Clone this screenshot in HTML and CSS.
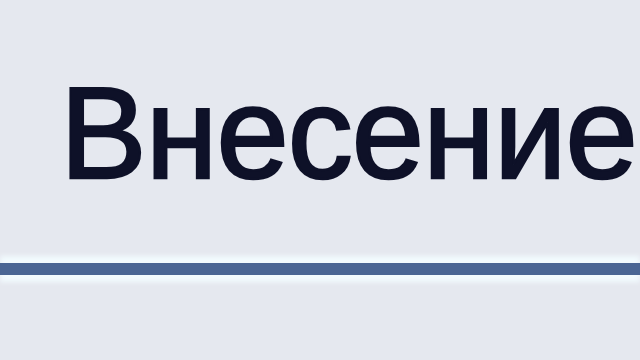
FILE: index.html
```html
<!DOCTYPE html>
<html>
<head>
<meta charset="utf-8">
<link rel="stylesheet" href="styles.css">
</head>
<body>
<div class="tab">
  <div class="label">Внесение</div>
  <div class="rule"></div>
</div>
</body>
</html>
```

FILE: styles.css
```css
html, body {
  margin: 0;
  padding: 0;
  width: 640px;
  height: 360px;
  overflow: hidden;
  background: #e5e8ef;
}
.tab {
  display: flex;
  flex-direction: column;
  padding-top: 63px;
}
.label {
  font-family: "Liberation Sans", Arial, sans-serif;
  font-size: 130px;
  line-height: 140px;
  color: #0e1128;
  padding-left: 60px;
  white-space: nowrap;
  letter-spacing: -1px;
  -webkit-text-stroke: 2.5px #0e1128;
}
.rule {
  margin-top: 60px;
  height: 12px;
  background: #4a6694;
  box-shadow: 0 -7px 5px #f2fbfe, 0 7px 5px #f2fbfe;
}
```
